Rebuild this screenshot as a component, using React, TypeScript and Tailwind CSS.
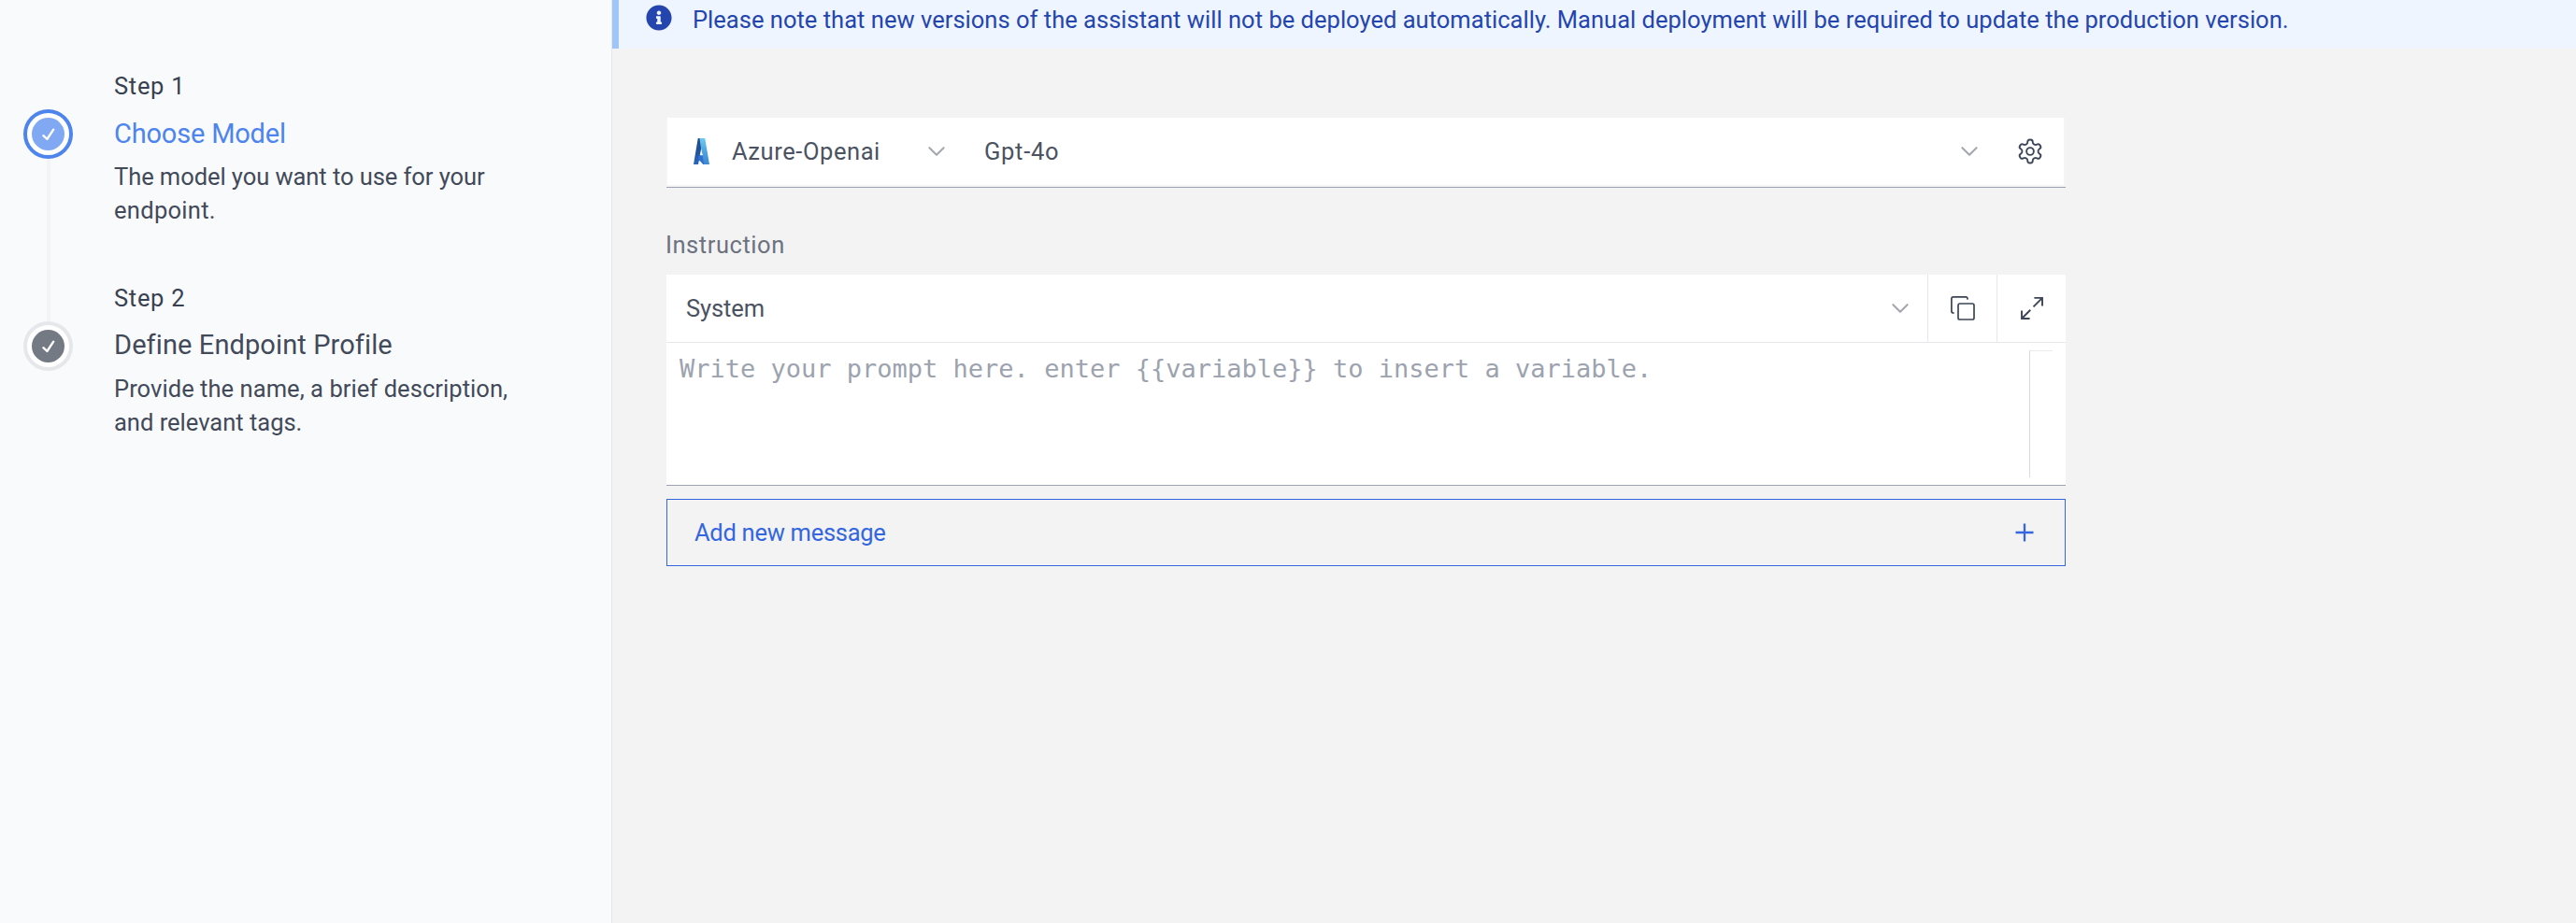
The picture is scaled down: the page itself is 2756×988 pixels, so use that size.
import type { ReactNode } from "react";
import { FaInfoCircle } from "react-icons/fa";

function Check() {
  return (
    <svg width="14" height="14" viewBox="0 0 14 14" fill="none" stroke="#fff" strokeWidth="2.3" strokeLinecap="round" strokeLinejoin="round">
      <path d="M1.4 8.2 5.4 12 12.2 1.6" />
    </svg>
  );
}

function Chevron() {
  return (
    <svg width="20" height="12" viewBox="0 0 20 12" fill="none" stroke="#a6a8b0" strokeWidth="2.1" strokeLinecap="round" strokeLinejoin="round">
      <path d="M2.4 2.2 10 9.8 17.6 2.2" />
    </svg>
  );
}

function AzureLogo() {
  return (
    <svg width="17" height="28" viewBox="0 0 50 84" preserveAspectRatio="none">
      <defs>
        <linearGradient id="azDark" x1="0" y1="0" x2="0" y2="1">
          <stop offset="0" stopColor="#234c88" />
          <stop offset="0.5" stopColor="#20529c" />
          <stop offset="1" stopColor="#2a68bd" />
        </linearGradient>
        <linearGradient id="azLight" x1="0" y1="0" x2="0" y2="1">
          <stop offset="0" stopColor="#6ccaf0" />
          <stop offset="0.5" stopColor="#4ea5e0" />
          <stop offset="1" stopColor="#3f86d3" />
        </linearGradient>
      </defs>
      <path d="M14 0H27L24 46 16 84H0Z" fill="url(#azDark)" />
      <path d="M15 55H32L37 84H30L15 67Z" fill="#2f6fcd" />
      <path d="M19 0H36L50 84H33L28 54 22 22Z" fill="url(#azLight)" />
      <path d="M24 34 28 54H20Z" fill="#f5faff" />
      <path d="M17 71 23 84H15Z" fill="#f5faff" />
    </svg>
  );
}

function Gear() {
  return (
    <svg width="30" height="30" viewBox="0 0 24 24" fill="none" stroke="#3d4556" strokeWidth="1.5" strokeLinecap="round" strokeLinejoin="round">
      <path d="M12.22 2h-.44a2 2 0 0 0-2 2v.18a2 2 0 0 1-1 1.73l-.43.25a2 2 0 0 1-2 0l-.15-.08a2 2 0 0 0-2.73.73l-.22.38a2 2 0 0 0 .73 2.73l.15.1a2 2 0 0 1 1 1.72v.51a2 2 0 0 1-1 1.74l-.15.09a2 2 0 0 0-.73 2.73l.22.38a2 2 0 0 0 2.73.73l.15-.08a2 2 0 0 1 2 0l.43.25a2 2 0 0 1 1 1.73V20a2 2 0 0 0 2 2h.44a2 2 0 0 0 2-2v-.18a2 2 0 0 1 1-1.73l.43-.25a2 2 0 0 1 2 0l.15.08a2 2 0 0 0 2.73-.73l.22-.39a2 2 0 0 0-.73-2.73l-.15-.08a2 2 0 0 1-1-1.74v-.5a2 2 0 0 1 1-1.74l.15-.09a2 2 0 0 0 .73-2.73l-.22-.38a2 2 0 0 0-2.73-.73l-.15.08a2 2 0 0 1-2 0l-.43-.25a2 2 0 0 1-1-1.73V4a2 2 0 0 0-2-2z" />
      <circle cx="12" cy="12" r="3.1" />
    </svg>
  );
}

function CopyIcon() {
  return (
    <svg width="28" height="28" viewBox="0 0 28 28" fill="none" stroke="#3d4556" strokeWidth="1.7" strokeLinecap="round" strokeLinejoin="round">
      <rect x="9" y="9" width="17" height="17" rx="1.8" />
      <path d="M4 19Q1.9 19 1.9 17V3.8Q1.9 1.9 3.8 1.9H17Q19 1.9 19 4" />
    </svg>
  );
}

function ExpandIcon() {
  return (
    <svg width="28" height="28" viewBox="0 0 28 28" fill="none" stroke="#3d4556" strokeWidth="1.9">
      <path d="M16.4 2.9H25V11.5M25 2.9 15.5 12.4M3 16.5V25H11.6M3 25 12.3 15.8" />
    </svg>
  );
}

function PlusIcon() {
  return (
    <svg width="20" height="20" viewBox="0 0 20 20" fill="none" stroke="#3466e0" strokeWidth="2.3">
      <path d="M10 0.5V19.5M0.5 10H19.5" />
    </svg>
  );
}

type StepProps = {
  label: string;
  title: ReactNode;
  children: ReactNode;
  active?: boolean;
  first?: boolean;
};

function Step({ label, title, children, active, first }: StepProps) {
  return (
    <li className="flex h-[227px] gap-[44px]">
      <div className="flex w-[53px] flex-col items-center">
        <div className={first ? "h-[43px] w-1" : "h-[43px] w-1 bg-[#f3f4f6]"} />
        <div
          className={
            active
              ? "flex size-[53px] shrink-0 items-center justify-center rounded-full border-4 border-[#4d84ee] bg-white"
              : "flex size-[53px] shrink-0 items-center justify-center rounded-full border-4 border-[#e5e7eb] bg-white"
          }
        >
          <div
            className={
              active
                ? "flex size-[35px] items-center justify-center rounded-full bg-[#81a9f3]"
                : "flex size-[35px] items-center justify-center rounded-full bg-[#737a84]"
            }
          >
            <Check />
          </div>
        </div>
        {first && <div className="w-1 flex-1 bg-[#f3f4f6]" />}
      </div>
      <div className="text-[25.5px] leading-9 text-[#424a5a]">
        <p className="tracking-[0.7px] text-[#374151]">{label}</p>
        <h2
          className={
            active
              ? "mt-[7px] text-[29px] leading-[53px] tracking-[-0.19px] text-[#4d84ee]"
              : "mt-[6px] text-[29px] leading-[53px] tracking-[0.1px]"
          }
        >
          {title}
        </h2>
        <div className={active ? "mt-px" : "mt-0.5"}>{children}</div>
      </div>
    </li>
  );
}

export default function App() {
  return (
    <div className="flex h-[988px] w-full overflow-hidden bg-[#f3f3f3] font-['Roboto',sans-serif]">
      <aside className="w-[655px] shrink-0 border-r border-[#e5e7eb] bg-[#f9fafc] pl-[25px] pt-[74px]">
        <ol>
          <Step label="Step 1" title="Choose Model" active first>
            <p className="tracking-[-0.06px]">The model you want to use for your</p>
            <p className="tracking-[0.3px]">endpoint.</p>
          </Step>
          <Step label="Step 2" title="Define Endpoint Profile">
            <p className="tracking-[0.06px]">Provide the name, a brief description,</p>
            <p>and relevant tags.</p>
          </Step>
        </ol>
      </aside>

      <main className="flex-1 text-[25.5px] leading-9">
        <div className="flex h-[52px] items-start border-l-[7px] border-[#9fc5f9] bg-[#eef5fe] pl-[29px] text-[#2545ae]">
          <FaInfoCircle className="mt-[5px] size-7" />
          <p className="ml-[22px] mt-[3px] whitespace-nowrap tracking-[0.021px]">
            Please note that new versions of the assistant will not be deployed automatically. Manual deployment will be required to update the production version.
          </p>
        </div>

        <div className="ml-[58px] mt-[74px] w-[1497px]">
          <div className="border-b border-[#9ca3b4] bg-[#f5f5f6] pb-0.5 pl-px pr-0.5">
            <div className="flex h-[72px] items-center bg-white text-[#4b5362]">
              <div className="ml-7 flex w-[17px]">
                <AzureLogo />
              </div>
              <p className="ml-[24px] w-[209px] tracking-[0.57px]">Azure-Openai</p>
              <Chevron />
              <p className="ml-[41px] tracking-[0.7px]">Gpt-4o</p>
              <div className="ml-auto mr-[21px] flex items-center gap-[40px]">
                <Chevron />
                <Gear />
              </div>
            </div>
          </div>

          <p className="-ml-px mt-[43px] tracking-[0.55px] text-[#6b7280]">Instruction</p>

          <section className="mt-[14px] h-[226px] border-b border-[#9ca3af] bg-white">
            <div className="flex h-[73px] border-b border-[#e5e7eb]">
              <div className="flex flex-1 items-center justify-between pl-[21px] pr-[19px] text-[#4b5362]">
                <p className="tracking-[-0.1px]">System</p>
                <Chevron />
              </div>
              <div className="flex w-[74px] items-center justify-center border-l border-[#e5e7eb]">
                <CopyIcon />
              </div>
              <div className="flex w-[74px] items-center justify-center border-l border-[#e5e7eb]">
                <ExpandIcon />
              </div>
            </div>
            <div className="flex justify-between pr-[14px] pt-2">
              <p className="pl-[14px] pt-[2px] font-['DejaVu_Sans_Mono',monospace] text-[27px] leading-9 text-[#9ca3af]">
                {"Write your prompt here. enter {{variable}} to insert a variable."}
              </p>
              <div className="h-[136px] w-[25px] border-l border-t border-l-[#dadada] border-t-[#ebebeb]" />
            </div>
          </section>

          <button className="mt-[14px] flex h-[72px] w-full items-center justify-between border border-[#3466e0] pl-[29px] pr-[33px] text-left tracking-[-0.28px] text-[#3466e0]">
            Add new message
            <PlusIcon />
          </button>
        </div>
      </main>
    </div>
  );
}
